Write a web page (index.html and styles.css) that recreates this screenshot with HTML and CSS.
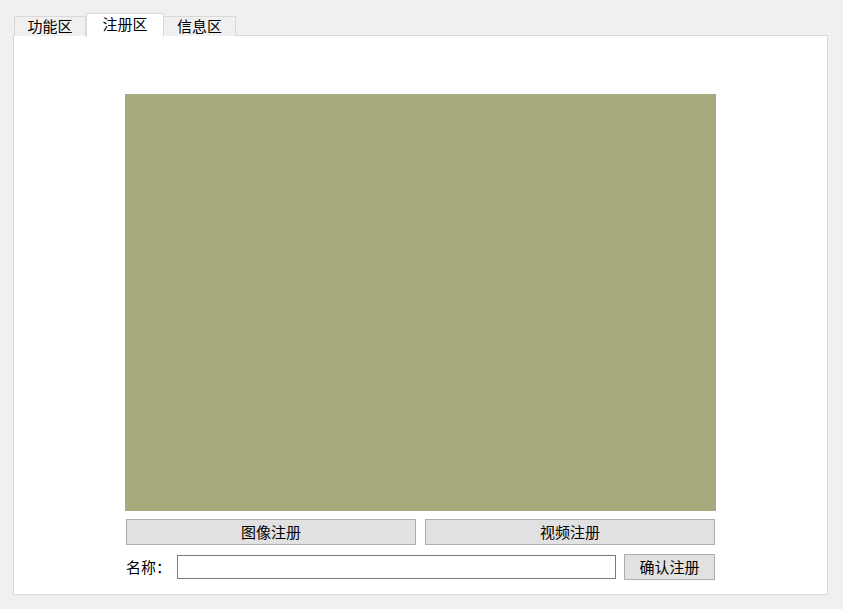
FILE: index.html
```html
<!DOCTYPE html>
<html lang="zh">
<head>
<meta charset="utf-8">
<title>注册区</title>
<link rel="stylesheet" href="styles.css">
</head>
<body>
<div class="window">
  <div class="tabbar">
    <div class="tab">功能区</div>
    <div class="tab tab-active">注册区</div>
    <div class="tab">信息区</div>
  </div>
  <div class="pane">
    <div class="content">
      <div class="video"></div>
      <div class="btn-row">
        <button class="btn btn-wide">图像注册</button>
        <button class="btn btn-wide">视频注册</button>
      </div>
      <div class="name-row">
        <span class="label">名称：</span>
        <input class="name-input" type="text">
        <button class="btn btn-confirm">确认注册</button>
      </div>
    </div>
  </div>
</div>
</body>
</html>
```
FILE: styles.css
```css
* { box-sizing: border-box; }
html, body {
  margin: 0;
  padding: 0;
  width: 843px;
  height: 609px;
  background: #f0f0f0;
  font-family: "Noto Sans CJK SC", "Noto Sans", sans-serif;
  font-size: 15px;
  color: #000;
  overflow: hidden;
}
.window {
  padding: 13px 15px 0 13px;
}
.tabbar {
  display: flex;
  align-items: flex-end;
  margin-left: 1px;
  height: 23px;
  position: relative;
  z-index: 2;
}
.tab {
  width: 72px;
  height: 20px;
  border: 1px solid #d9d9d9;
  border-bottom: none;
  background: #f0f0f0;
  display: flex;
  align-items: center;
  justify-content: center;
  line-height: 1;
  padding-bottom: 3px;
}
.tab + .tab { border-left: none; }
.tab-active {
  width: 78px;
  height: 24px;
  background: #fff;
  border-left: 1px solid #d9d9d9 !important;
  margin-bottom: -1px;
  padding-bottom: 5px;
}
.tab-active + .tab { border-left: none; }
.pane {
  margin-top: -1px;
  width: 815px;
  height: 560px;
  background: #fff;
  border: 1px solid #d9d9d9;
  display: flex;
  justify-content: center;
  padding-top: 58px;
  position: relative;
  z-index: 1;
}
.content {
  width: 591px;
  display: flex;
  flex-direction: column;
}
.video {
  width: 591px;
  height: 417px;
  background: #a8a97c;
}
.btn-row {
  display: flex;
  gap: 9px;
  margin-top: 8px;
  padding: 0 1px;
}
.btn {
  font-family: inherit;
  font-size: 15px;
  color: #000;
  background: #e1e1e1;
  border: 1px solid #adadad;
  border-radius: 0;
  margin: 0;
  padding: 0 0 1px;
  line-height: 1;
}
.btn-wide {
  width: 290px;
  height: 26px;
}
.name-row {
  display: flex;
  align-items: center;
  margin-top: 9px;
  padding-left: 1px;
  height: 26px;
}
.label {
  width: 51px;
  line-height: 1;
  padding-bottom: 2px;
}
.name-input {
  width: 439px;
  height: 24px;
  border: 1px solid #7a7a7a;
  background: #fff;
  margin: 0;
  padding: 0 2px;
  outline: none;
}
.btn-confirm {
  width: 91px;
  height: 26px;
  margin-left: 8px;
}
```
